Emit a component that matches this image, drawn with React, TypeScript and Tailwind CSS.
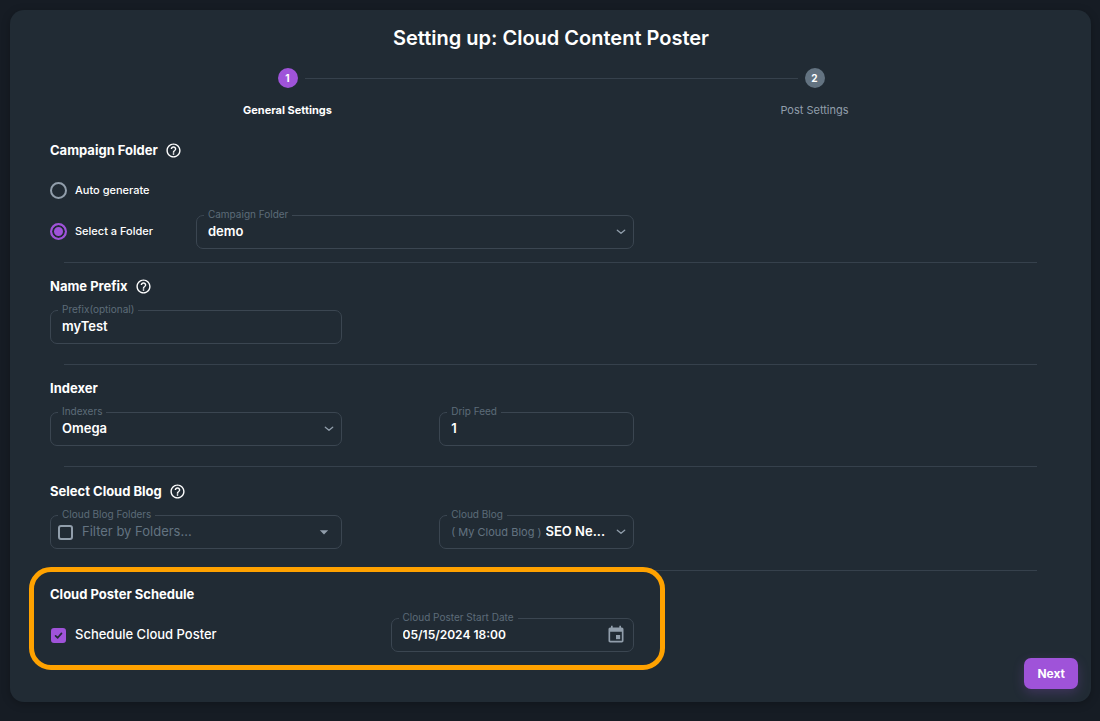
import type { ReactNode } from "react";
import { MdArrowDropDown, MdHelpOutline } from "react-icons/md";

const controlText =
  "min-w-0 flex-1 appearance-none bg-transparent text-[13px] font-semibold text-white outline-none";

function Field({ id, label, children }: { id: string; label: string; children: ReactNode }) {
  return (
    <fieldset className="h-10 min-w-0 rounded-[7px] border border-[#3b4651]">
      <legend className="ml-[7px] h-3 px-1 text-[10px] leading-[10px] text-[#5d6b79]">
        <label htmlFor={id} className="block">
          {label}
        </label>
      </legend>
      <div className="-mt-[5px] flex h-8 items-center px-[11px]">{children}</div>
    </fieldset>
  );
}

function Chevron() {
  return (
    <svg viewBox="0 0 10 6" className="pointer-events-none -mr-1 h-[6px] w-[10px] shrink-0" fill="none">
      <path d="M1.3 1.2 5 4.3 8.7 1.2" stroke="#919eab" strokeWidth="1.3" strokeLinecap="round" strokeLinejoin="round" />
    </svg>
  );
}

function Heading({ children, help }: { children: ReactNode; help?: boolean }) {
  return (
    <div className="flex h-[22px] items-center gap-[7px] text-white">
      <h2 className="text-[13px] leading-[22px] font-bold">{children}</h2>
      {help && (
        <button type="button" aria-label="Help">
          <MdHelpOutline size={17} />
        </button>
      )}
    </div>
  );
}

function Divider() {
  return <hr className="-mr-3.5 ml-3.5 border-t border-[#36414c]" />;
}

function Step({ number, label, active }: { number: number; label: string; active?: boolean }) {
  const line = <span className="h-px flex-1 bg-[#36414c]" />;
  const blank = <span className="flex-1" />;
  return (
    <li className="flex flex-1 flex-col items-center gap-3">
      <div className="flex w-full items-center">
        {active ? blank : line}
        <span
          className={
            active
              ? "mx-[7px] flex size-5 items-center justify-center rounded-full bg-[#9f53d9] text-[10px] font-bold text-white"
              : "mx-[7px] flex size-5 items-center justify-center rounded-full bg-[#637381] text-[10px] font-bold text-white"
          }
        >
          {number}
        </span>
        {active ? line : blank}
      </div>
      <span
        className={
          active
            ? "text-[11px] leading-5 font-bold text-white"
            : "text-[11px] leading-5 text-[#919eab]"
        }
      >
        {label}
      </span>
    </li>
  );
}

function Radio({ label, defaultChecked }: { label: string; defaultChecked?: boolean }) {
  return (
    <label className="flex items-center gap-2 text-[11px] font-medium text-white">
      <input
        type="radio"
        name="folder-mode"
        defaultChecked={defaultChecked}
        className="size-[17px] shrink-0 appearance-none rounded-full border-2 border-[#919eab] checked:border-[#9f53d9] checked:bg-[#9f53d9] checked:shadow-[inset_0_0_0_2px_#212b34]"
      />
      {label}
    </label>
  );
}

export default function App() {
  return (
    <div className="min-h-screen bg-[#161c24] pt-2.5 pr-[9px] pb-[19px] pl-2.5 font-['Inter',sans-serif]">
      <main className="rounded-[14px] bg-[#212b34] pt-4 pr-[13px] pb-[13px] pl-3.5 shadow-[0_2px_8px_rgba(0,0,0,0.25)]">
        <h1 className="text-center text-xl leading-6 font-semibold text-white">
          Setting up: Cloud Content Poster
        </h1>
        <ol className="mt-[18px] flex">
          <Step number={1} label="General Settings" active />
          <Step number={2} label="Post Settings" />
        </ol>

        <form className="mt-[19px] mr-[55px] ml-[26px]">
          <section className="pb-[13px]">
            <Heading help>Campaign Folder</Heading>
            <div className="mt-[21px]">
              <Radio label="Auto generate" />
            </div>
            <div className="mt-2.5 grid grid-cols-[15%_45%] items-center">
              <div className="pt-1">
                <Radio label="Select a Folder" defaultChecked />
              </div>
              <Field id="campaign-folder" label="Campaign Folder">
                <select id="campaign-folder" className={controlText}>
                  <option>demo</option>
                </select>
                <Chevron />
              </Field>
            </div>
          </section>
          <Divider />

          <section className="flex flex-col gap-[7px] pt-3 pb-5">
            <Heading help>Name Prefix</Heading>
            <div className="grid grid-cols-[30%]">
              <Field id="prefix" label="Prefix(optional)">
                <input id="prefix" type="text" defaultValue="myTest" className={controlText} />
              </Field>
            </div>
          </section>
          <Divider />

          <section className="flex flex-col gap-[7px] pt-3 pb-5">
            <Heading>Indexer</Heading>
            <div className="grid grid-cols-[30%_20%] gap-x-[10%]">
              <Field id="indexers" label="Indexers">
                <select id="indexers" className={controlText}>
                  <option>Omega</option>
                </select>
                <Chevron />
              </Field>
              <Field id="drip-feed" label="Drip Feed">
                <input id="drip-feed" type="text" inputMode="numeric" defaultValue="1" className={controlText} />
              </Field>
            </div>
          </section>
          <Divider />

          <section className="flex flex-col gap-[7px] pt-[13px] pb-[21px]">
            <Heading help>Select Cloud Blog</Heading>
            <div className="grid grid-cols-[30%_20%] gap-x-[10%]">
              <Field id="blog-folders" label="Cloud Blog Folders">
                <input
                  type="checkbox"
                  aria-label="Select all folders"
                  className="-ml-1 size-[15px] shrink-0 appearance-none rounded-[3px] border-2 border-[#919eab] checked:bg-[#9f53d9]"
                />
                <input
                  id="blog-folders"
                  type="text"
                  placeholder="Filter by Folders..."
                  className="ml-[9px] min-w-0 flex-1 bg-transparent text-[13px] text-white outline-none placeholder:text-[#637381]"
                />
                <button type="button" aria-label="Open" className="-mr-1 text-[#919eab]">
                  <MdArrowDropDown size={20} />
                </button>
              </Field>
              <Field id="cloud-blog" label="Cloud Blog">
                <span className="mr-1 shrink-0 text-[11px] text-[#637381]">( My Cloud Blog )</span>
                <select id="cloud-blog" className={controlText}>
                  <option>SEO Ne...</option>
                </select>
                <Chevron />
              </Field>
            </div>
          </section>
          <Divider />

          <section className="relative flex w-3/5 flex-col gap-[7px] pt-3">
            <Heading>Cloud Poster Schedule</Heading>
            <div className="grid grid-cols-[7fr_5fr] items-center">
              <label className="flex items-center gap-2 pt-1.5 text-[13px] font-medium text-white">
                <span className="relative flex size-[17px] shrink-0 items-center justify-center">
                  <input
                    type="checkbox"
                    defaultChecked
                    className="peer size-[15px] appearance-none rounded-[3px] border-2 border-[#919eab] checked:border-[#9f53d9] checked:bg-[#9f53d9]"
                  />
                  <svg
                    viewBox="0 0 15 15"
                    fill="none"
                    className="pointer-events-none absolute hidden size-[15px] peer-checked:block"
                  >
                    <path
                      d="M4.6 7.8 6.7 9.8 10.5 5.4"
                      stroke="#212b34"
                      strokeWidth="1.7"
                      strokeLinecap="round"
                      strokeLinejoin="round"
                    />
                  </svg>
                </span>
                Schedule Cloud Poster
              </label>
              <Field id="start-date" label="Cloud Poster Start Date">
                <input
                  id="start-date"
                  type="text"
                  defaultValue="05/15/2024 18:00"
                  className="min-w-0 flex-1 bg-transparent text-xs font-semibold text-white outline-none"
                />
                <button type="button" aria-label="Choose date" className="-mr-1 text-[#919eab]">
                  <svg viewBox="0 0 24 24" className="size-5" fill="currentColor">
                    <path d="M12 12h5v5h-5z" />
                    <path d="M19 3h-1V1h-2v2H8V1H6v2H5c-1.1 0-2 .9-2 2v14c0 1.1.9 2 2 2h14c1.1 0 2-.9 2-2V5c0-1.1-.9-2-2-2zm0 16H5V8h14v11z" />
                  </svg>
                </button>
              </Field>
            </div>
            <div className="pointer-events-none absolute -top-1 -right-[31px] -bottom-[18px] -left-[21px] rounded-[22px] border-[5px] border-[#ffa200]" />
          </section>
        </form>

        <div className="mt-1.5 flex justify-end">
          <button
            type="button"
            className="h-[31px] rounded-[7px] bg-[#9f53d9] px-[13px] text-[12px] font-bold text-white shadow-[0_4px_12px_rgba(159,83,217,0.24)]"
          >
            Next
          </button>
        </div>
      </main>
    </div>
  );
}
